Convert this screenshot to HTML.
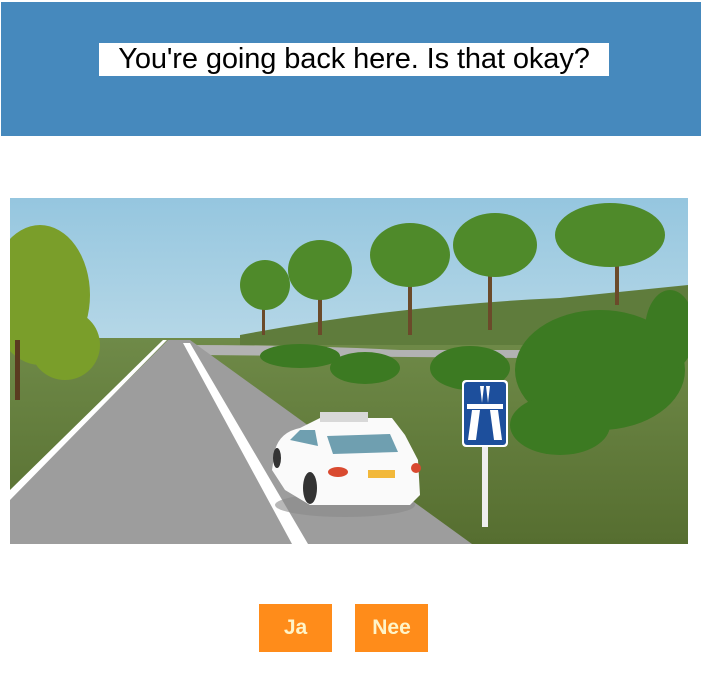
<!DOCTYPE html>
<html><head><meta charset="utf-8"><style>
html,body{margin:0;padding:0;background:#fff;width:703px;height:674px;overflow:hidden;font-family:"Liberation Sans",sans-serif}
.band{position:absolute;left:1px;top:2px;width:700px;height:134px;background:#4689bd}
.title{position:absolute;left:99px;top:43px;width:510px;height:33px;background:#fff;color:#000;font-size:29px;line-height:33px;text-align:center;letter-spacing:-0.1px}
.btn{position:absolute;top:604px;height:48px;width:73px;background:#ff8c1a;color:#fff4c8;font-weight:bold;font-size:21px;line-height:48px;text-align:center}
svg{position:absolute;left:0;top:0}
</style></head><body>
<div class="band"></div>
<div class="title">You're going back here. Is that okay?</div>
<svg width="703" height="674" viewBox="0 0 703 674">
<defs>
<linearGradient id="sky" x1="0" y1="0" x2="0" y2="1"><stop offset="0" stop-color="#95c6df"/><stop offset="1" stop-color="#e4f0f2"/></linearGradient>
<linearGradient id="grass" x1="0" y1="0" x2="0" y2="1"><stop offset="0" stop-color="#6f8a48"/><stop offset="1" stop-color="#566e30"/></linearGradient>
<clipPath id="c"><rect x="10" y="198" width="678" height="346"/></clipPath>
</defs>
<g clip-path="url(#c)">
<rect x="10" y="198" width="678" height="346" fill="url(#sky)"/>
<rect x="10" y="338" width="678" height="206" fill="url(#grass)"/>
<path d="M240 335 Q400 305 560 298 L688 285 L688 345 L240 345Z" fill="#5f7c3c"/>
<path d="M190 345 Q300 345 400 350 L520 350 L520 358 L200 355Z" fill="#b2b2b2"/>
<g fill="#6b4a2a">
<rect x="262" y="300" width="3" height="35"/><rect x="318" y="290" width="4" height="45"/>
<rect x="408" y="280" width="4" height="55"/><rect x="488" y="275" width="4" height="55"/>
<rect x="615" y="260" width="4" height="45"/>
</g>
<g fill="#4f8a2a">
<ellipse cx="265" cy="285" rx="25" ry="25"/><ellipse cx="320" cy="270" rx="32" ry="30"/>
<ellipse cx="410" cy="255" rx="40" ry="32"/><ellipse cx="495" cy="245" rx="42" ry="32"/>
<ellipse cx="610" cy="235" rx="55" ry="32"/>
</g>
<g fill="#3c7a22">
<ellipse cx="300" cy="356" rx="40" ry="12"/><ellipse cx="365" cy="368" rx="35" ry="16"/>
<ellipse cx="470" cy="368" rx="40" ry="22"/><ellipse cx="600" cy="370" rx="85" ry="60"/>
<ellipse cx="560" cy="425" rx="50" ry="30"/><ellipse cx="670" cy="330" rx="25" ry="40"/>
</g>
<g fill="#7a9e2a"><ellipse cx="40" cy="295" rx="50" ry="70"/><ellipse cx="65" cy="345" rx="35" ry="35"/></g>
<rect x="15" y="340" width="5" height="60" fill="#5a3a20"/>
<path d="M10 498 L168 340 L190 340 L472 544 L10 544Z" fill="#9d9d9d"/>
<path d="M10 490 L163 340 L167 340 L10 500Z" fill="#fff"/>
<path d="M183 343 L190 343 L308 544 L292 544Z" fill="#fff"/>
<ellipse cx="345" cy="505" rx="70" ry="12" fill="#888" opacity=".6"/>
<path d="M275 450 Q280 432 300 428 L320 418 L392 418 L405 435 L418 460 L420 495 L410 505 L310 505 L285 490 L272 470Z" fill="#fafafa"/>
<rect x="320" y="412" width="48" height="10" fill="#d8d8d8"/>
<path d="M327 436 L390 434 L398 452 L333 454Z" fill="#6f9fb0"/>
<path d="M290 440 L300 430 L315 430 L318 446Z" fill="#6f9fb0"/>
<ellipse cx="338" cy="472" rx="10" ry="5" fill="#d94a30"/>
<ellipse cx="416" cy="468" rx="5" ry="5" fill="#d94a30"/>
<rect x="368" y="470" width="27" height="8" fill="#f2b83a"/>
<ellipse cx="310" cy="488" rx="7" ry="16" fill="#333"/>
<ellipse cx="277" cy="458" rx="4" ry="10" fill="#333"/>
<rect x="482" y="445" width="6" height="82" fill="#eee"/>
<rect x="462" y="380" width="46" height="67" rx="4" fill="#fff"/>
<rect x="464" y="382" width="42" height="63" rx="3" fill="#1d4f9c"/>
<path d="M480 386 L484 386 L482 403 Z M486 386 L490 386 L488 403Z" fill="#fff"/>
<rect x="467" y="404" width="36" height="5" fill="#fff"/>
<path d="M472 410 L480 410 L476 440 L468 440Z M490 410 L498 410 L502 440 L494 440Z" fill="#fff"/>
</g>
</svg>
<div class="btn" style="left:259px">Ja</div>
<div class="btn" style="left:355px">Nee</div>
</body></html>
